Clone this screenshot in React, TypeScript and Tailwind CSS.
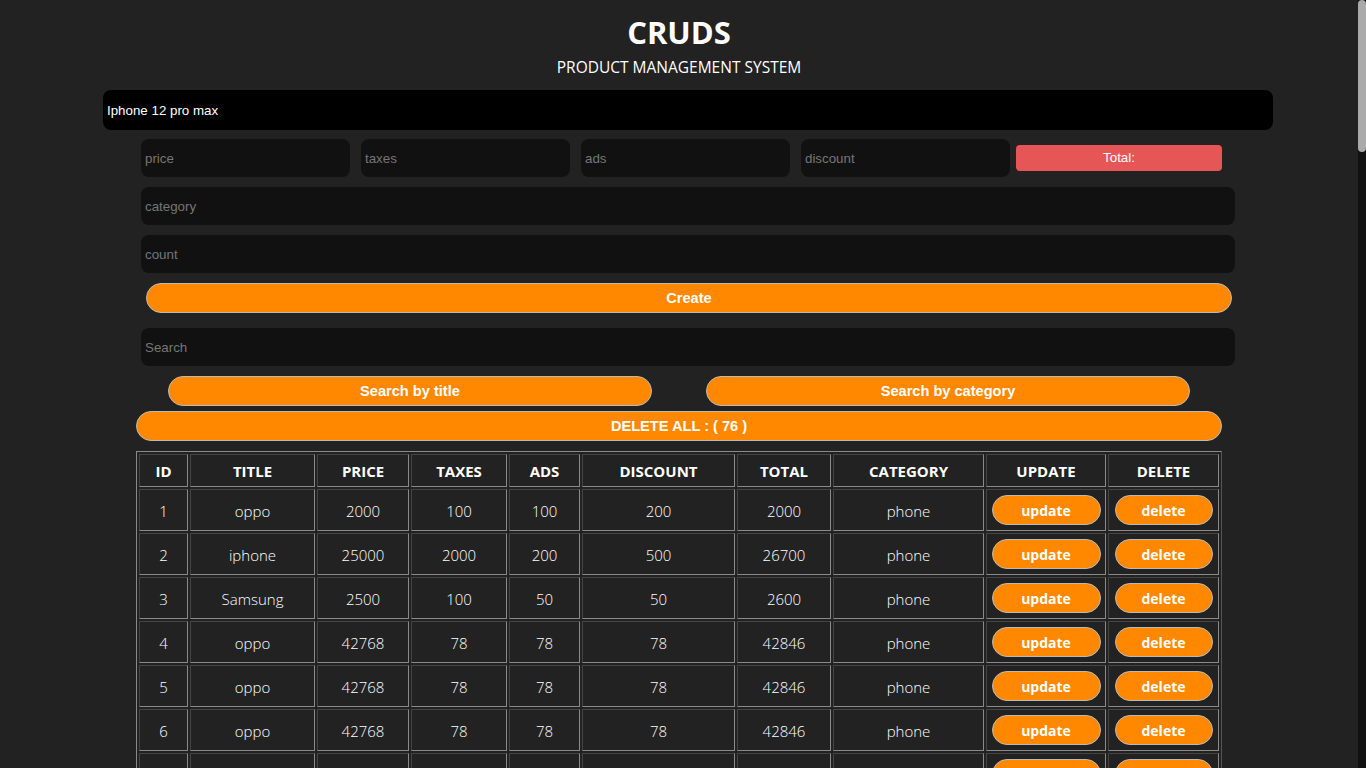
import React from 'react'

type Product = {
    id: number
    title: string
    price: number
    taxes: number
    ads: number
    discount: number
    total: number
    category: string
}

const firstRows: Product[] = [
    { id: 1, title: 'oppo', price: 2000, taxes: 100, ads: 100, discount: 200, total: 2000, category: 'phone' },
    { id: 2, title: 'iphone', price: 25000, taxes: 2000, ads: 200, discount: 500, total: 26700, category: 'phone' },
    { id: 3, title: 'Samsung', price: 2500, taxes: 100, ads: 50, discount: 50, total: 2600, category: 'phone' },
]

const products: Product[] = [
    ...firstRows,
    ...Array.from({ length: 73 }, (_, i) => ({
        id: i + 4,
        title: 'oppo',
        price: 42768,
        taxes: 78,
        ads: 78,
        discount: 78,
        total: 42846,
        category: 'phone',
    })),
]

const heads = [
    { label: 'ID', w: 'w-[49px]' },
    { label: 'TITLE', w: 'w-[125px]' },
    { label: 'PRICE', w: 'w-[92px]' },
    { label: 'TAXES', w: 'w-[96px]' },
    { label: 'ADS', w: 'w-[71px]' },
    { label: 'DISCOUNT', w: 'w-[153px]' },
    { label: 'TOTAL', w: 'w-[94px]' },
    { label: 'CATEGORY', w: 'w-[151px]' },
    { label: 'UPDATE', w: 'w-[120px]' },
    { label: 'DELETE', w: 'w-[111px]' },
]

const field =
    "h-[38px] rounded-lg bg-[#111] px-1 text-[13.33px] text-white outline-none placeholder:text-[#767676] font-['Liberation_Sans',Arial,sans-serif]"

const orangeBtn =
    "h-[30px] pt-[2px] rounded-full border border-[#bbb] bg-[#ff8800] text-[14.6px] font-bold text-white font-['Liberation_Sans',Arial,sans-serif]"

const cell = 'border border-t-[#444] border-l-[#444] border-b-[#8a8a8a] border-r-[#8a8a8a] text-center'

const App = () => {
    return (
        <div className="flex h-screen bg-[#222] text-white">

            <div className="h-full flex-1 overflow-y-auto [scrollbar-width:none]">

                <div className="mx-auto flex w-[1086px] flex-col pb-10">

                    <h2 className="mt-[12px] text-center text-[31px] leading-[40px] font-bold font-['Open_Sans',sans-serif]">CRUDS</h2>
                    <p className="mt-[5px] text-center text-[15.5px] leading-[20px] font-['Open_Sans',sans-serif]">PRODUCT MANAGEMENT SYSTEM</p>

                    <input
                        defaultValue="Iphone 12 pro max"
                        className="mt-[13px] ml-[-33px] h-[40px] w-[1170px] rounded-lg bg-black px-1 text-[13.33px] text-white outline-none font-['Liberation_Sans',Arial,sans-serif]"
                    />

                    <div className="mt-[9px] ml-[5px] flex items-center">
                        <input placeholder="price" className={`${field} mr-[11px] w-[209px]`} />
                        <input placeholder="taxes" className={`${field} mr-[11px] w-[209px]`} />
                        <input placeholder="ads" className={`${field} mr-[11px] w-[209px]`} />
                        <input placeholder="discount" className={`${field} mr-[6px] w-[209px]`} />
                        <div className="flex h-[26px] w-[206px] items-center justify-center rounded bg-[#e65656] text-[13.33px] font-['Liberation_Sans',Arial,sans-serif]">Total:</div>
                    </div>

                    <input placeholder="category" className={`${field} mt-[10px] ml-[5px] w-[1094px]`} />
                    <input placeholder="count" className={`${field} mt-[10px] ml-[5px] w-[1094px]`} />

                    <button className={`${orangeBtn} mt-[10px] ml-[10px] w-[1086px]`}>Create</button>

                    <input placeholder="Search" className={`${field} mt-[15px] ml-[5px] w-[1094px]`} />

                    <div className="mt-[10px] flex">
                        <button className={`${orangeBtn} ml-[32px] w-[484px]`}>Search by title</button>
                        <button className={`${orangeBtn} ml-[54px] w-[484px]`}>Search by category</button>
                    </div>

                    <button className={`${orangeBtn} mt-[5px] w-[1086px]`}>DELETE ALL : ( 76 )</button>

                    <table className="mt-[10px] w-[1086px] table-fixed border-separate border-spacing-[2px] border border-t-[#8a8a8a] border-l-[#8a8a8a] border-b-[#555] border-r-[#555] font-['Open_Sans',sans-serif]">
                        <thead>
                            <tr>
                                {heads.map((h) => (
                                    <th key={h.label} className={`${cell} ${h.w} h-[33px] pt-[2px] text-[15px] font-bold`}>{h.label}</th>
                                ))}
                            </tr>
                        </thead>
                        <tbody>
                            {products.map((p) => (
                                <tr key={p.id} className="text-[15px] font-light">
                                    <td className={`${cell} h-[42px] pt-[2px]`}>{p.id}</td>
                                    <td className={`${cell} pt-[2px]`}>{p.title}</td>
                                    <td className={`${cell} pt-[2px]`}>{p.price}</td>
                                    <td className={`${cell} pt-[2px]`}>{p.taxes}</td>
                                    <td className={`${cell} pt-[2px]`}>{p.ads}</td>
                                    <td className={`${cell} pt-[2px]`}>{p.discount}</td>
                                    <td className={`${cell} pt-[2px]`}>{p.total}</td>
                                    <td className={`${cell} pt-[2px]`}>{p.category}</td>
                                    <td className={cell}>
                                        <button className="h-[30px] w-[109px] rounded-full border border-[#bbb] bg-[#ff8800] text-[14px] font-bold text-white">update</button>
                                    </td>
                                    <td className={cell}>
                                        <button className="h-[30px] w-[98px] rounded-full border border-[#bbb] bg-[#ff8800] text-[14px] font-bold text-white">delete</button>
                                    </td>
                                </tr>
                            ))}
                        </tbody>
                    </table>

                </div>

            </div>

            {/* page scrollbar */}
            <div className="w-2 shrink-0 bg-[#111]">
                <div className="h-[152px] rounded-full bg-[#aaa]" />
            </div>

        </div>
    )
}

export default App
